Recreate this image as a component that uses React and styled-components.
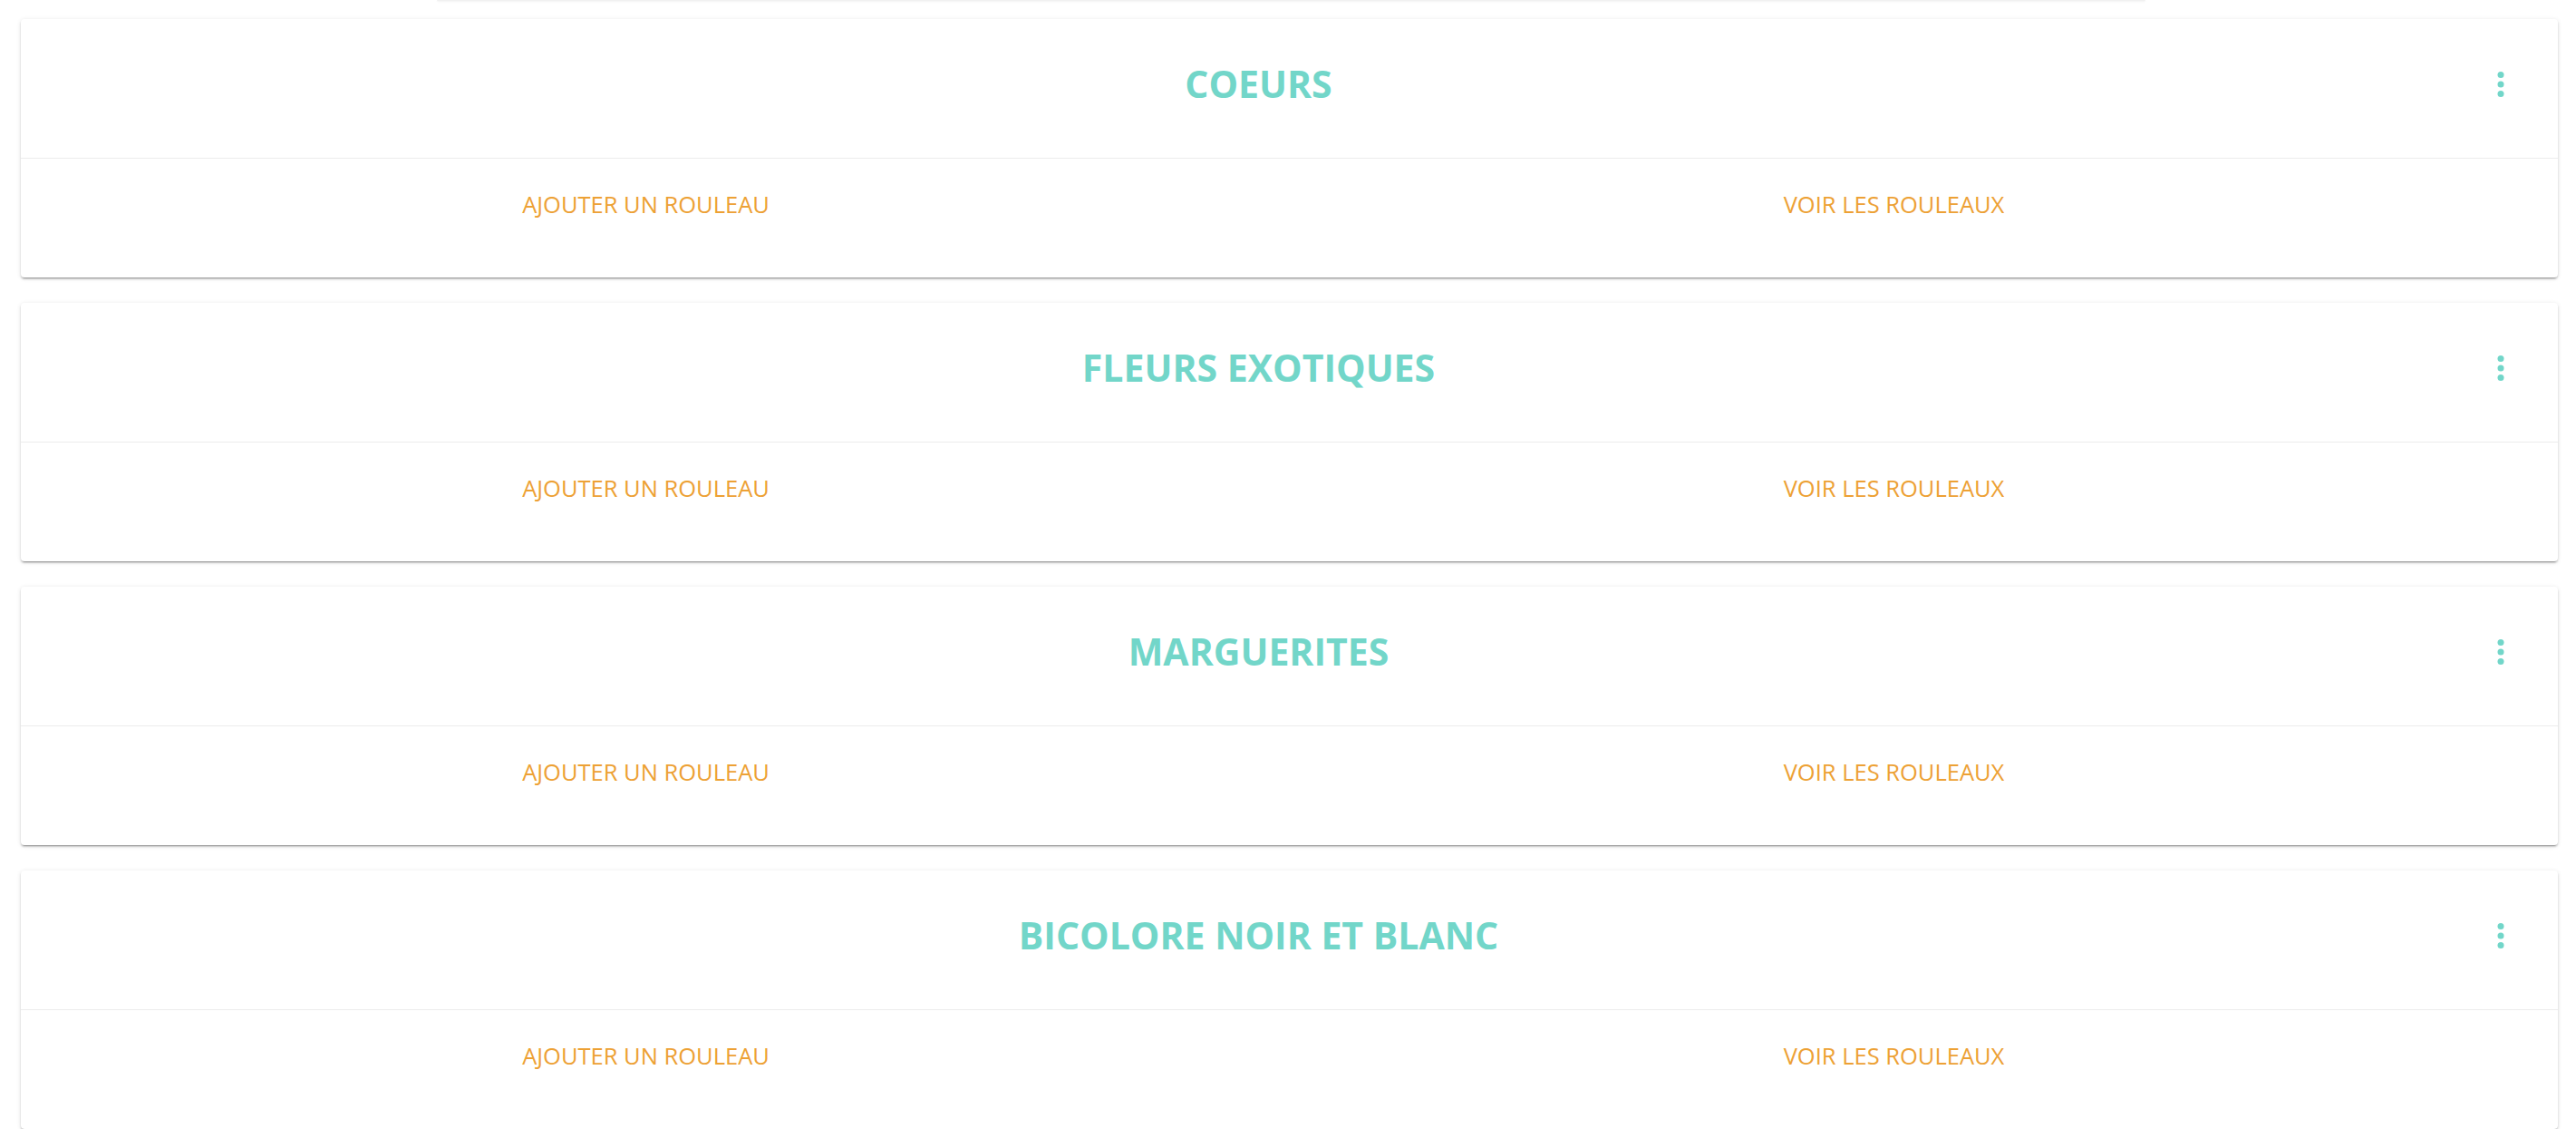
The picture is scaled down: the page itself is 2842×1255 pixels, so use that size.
import React from "react";
import styled, { createGlobalStyle } from "styled-components";

const GlobalStyle = createGlobalStyle`
  body {
    margin: 0;
    background: #ffffff;
    font-family: "Open Sans", "Liberation Sans", sans-serif;
  }
`;

const Page = styled.div`
  display: flex;
  flex-direction: column;
  padding: 0 20px 0 23px;
`;

const TopEdge = styled.div`
  align-self: center;
  width: 1885px;
  height: 1px;
  margin-right: -3px;
  background: #f1f1f1;
  border-radius: 0 0 4px 4px;
  box-shadow: 0 1px 2px rgba(0, 0, 0, 0.08);
`;

const List = styled.div`
  display: flex;
  flex-direction: column;
  gap: 28px;
  margin-top: 20px;
`;

const Card = styled.div`
  background: #ffffff;
  border-radius: 4px;
  box-shadow: 0 3px 1px -2px rgba(0, 0, 0, 0.22), 0 2px 2px 0 rgba(0, 0, 0, 0.16),
    0 1px 5px 0 rgba(0, 0, 0, 0.12);
  overflow: hidden;
`;

const Header = styled.div`
  display: flex;
  align-items: center;
  height: 154px;
  box-sizing: border-box;
  padding: 0 42px 10px 16px;
  border-bottom: 1px solid #ececec;
`;

const Title = styled.h2`
  flex: 1;
  margin: 0;
  text-align: center;
  font-size: 41px;
  line-height: 1;
  font-weight: 700;
  color: #72d6c9;
`;

const MenuButton = styled.button`
  display: flex;
  align-items: center;
  justify-content: center;
  width: 42px;
  height: 42px;
  padding: 0;
  border: none;
  background: transparent;
  color: #72d6c9;
  cursor: pointer;
`;

const Actions = styled.div`
  display: grid;
  grid-template-columns: 1fr 1fr;
  align-items: center;
  height: 131px;
  box-sizing: border-box;
  padding: 26px 44px 57px 1px;
`;

const ActionButton = styled.button`
  justify-self: center;
  height: 48px;
  padding: 0 12px;
  border: none;
  background: transparent;
  font-family: "Open Sans", "Liberation Sans", sans-serif;
  font-size: 25.5px;
  font-weight: 400;
  text-transform: uppercase;
  color: #eda135;
  cursor: pointer;
`;

function MoreIcon() {
  return (
    <svg width="42" height="42" viewBox="0 0 24 24" fill="currentColor">
      <circle cx="12" cy="6" r="2" />
      <circle cx="12" cy="12" r="2" />
      <circle cx="12" cy="18" r="2" />
    </svg>
  );
}

const collections = [
  "Coeurs",
  "Fleurs exotiques",
  "Marguerites",
  "Bicolore noir et blanc",
];

export default function App() {
  return (
    <>
      <GlobalStyle />
      <Page>
        <TopEdge />
        <List>
          {collections.map((name) => (
            <Card key={name}>
              <Header>
                <Title>{name.toUpperCase()}</Title>
                <MenuButton aria-label="menu">
                  <MoreIcon />
                </MenuButton>
              </Header>
              <Actions>
                <ActionButton>Ajouter un rouleau</ActionButton>
                <ActionButton>Voir les rouleaux</ActionButton>
              </Actions>
            </Card>
          ))}
        </List>
      </Page>
    </>
  );
}
